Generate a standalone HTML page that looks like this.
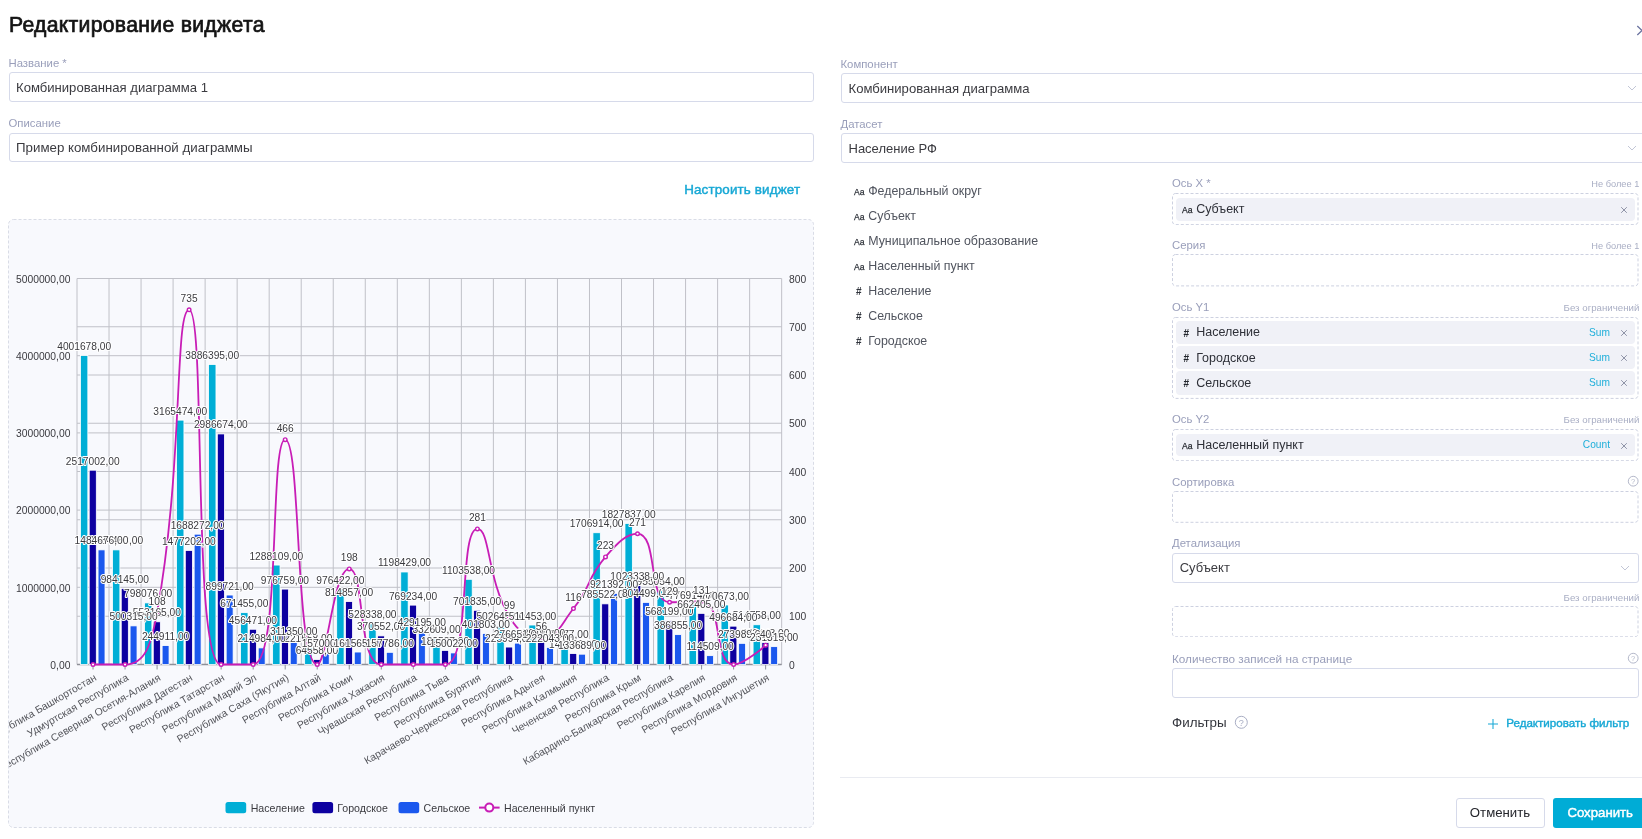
<!DOCTYPE html>
<html><head><meta charset="utf-8"><title>Редактирование виджета</title>
<style>
html,body{margin:0;padding:0;}
body{width:1642px;height:839px;overflow:hidden;position:relative;background:#fff;font-family:"Liberation Sans",sans-serif;}
.t{position:absolute;white-space:nowrap;line-height:1;}
.b{position:absolute;box-sizing:border-box;}
</style></head><body>
<div id="wrap" style="position:absolute;left:0;top:0;width:1642px;height:839px;will-change:transform;background:#fff;">
<div class="t" style="left:8.9px;top:13.7px;font-size:21.2px;color:#141414;-webkit-text-stroke:0.7px #141414;letter-spacing:0.3px;">Редактирование виджета</div>
<svg class="b" style="left:1632px;top:20px" width="14" height="20"><path d="M5.3,6 L10,10.5 L5.3,15" fill="none" stroke="#6C74A0" stroke-width="1.3"/></svg>
<div class="t" style="left:8.5px;top:58.4px;font-size:11.35px;color:#999EBA;">Название *</div>
<div class="b" style="left:8.5px;top:72.0px;width:805.0px;height:29.5px;border:1px solid #D6DAEA;border-radius:3px;background:#fff;"></div>
<div class="t" style="left:16.0px;top:80.7px;font-size:13.1px;color:#3B3B40;">Комбинированная диаграмма 1</div>
<div class="t" style="left:8.5px;top:118.4px;font-size:11.35px;color:#999EBA;">Описание</div>
<div class="b" style="left:8.5px;top:132.5px;width:805.0px;height:29.5px;border:1px solid #D6DAEA;border-radius:3px;background:#fff;"></div>
<div class="t" style="left:16.0px;top:140.9px;font-size:13.3px;color:#3B3B40;">Пример комбинированной диаграммы</div>
<div class="t" style="right:841.8px;top:182.8px;font-size:13.4px;color:#17A8D5;-webkit-text-stroke:0.45px #17A8D5;letter-spacing:0.15px;">Настроить виджет</div>
<svg class="b" style="left:8px;top:219px" width="806" height="609"><rect x="0.5" y="0.5" width="805" height="608" rx="5" fill="#F8F9FD" stroke="#D9DCE6" stroke-dasharray="3 2"/></svg>
<div class="t" style="left:840.5px;top:59.4px;font-size:11.35px;color:#999EBA;">Компонент</div>
<div class="b" style="left:840.5px;top:73.0px;width:819.5px;height:29.5px;border:1px solid #D6DAEA;border-radius:3px;background:#fff;"></div>
<div class="t" style="left:848.5px;top:82.3px;font-size:13.1px;color:#3B3B40;">Комбинированная диаграмма</div>
<svg class="b" style="left:1626.8px;top:85.0px" width="10" height="6"><path d="M1,1 L5,5 L9,1" fill="none" stroke="#C2C6D6" stroke-width="1"/></svg>
<div class="t" style="left:840.5px;top:119.4px;font-size:11.35px;color:#999EBA;">Датасет</div>
<div class="b" style="left:840.5px;top:133.0px;width:819.5px;height:29.5px;border:1px solid #D6DAEA;border-radius:3px;background:#fff;"></div>
<div class="t" style="left:848.5px;top:142.4px;font-size:13.0px;color:#3B3B40;">Население РФ</div>
<svg class="b" style="left:1626.8px;top:145.0px" width="10" height="6"><path d="M1,1 L5,5 L9,1" fill="none" stroke="#C2C6D6" stroke-width="1"/></svg>
<div class="t" style="left:853.8px;top:187.3px;font-size:9.8px;color:#2A2E36;-webkit-text-stroke:0.25px #2A2E36;transform:scaleX(0.88);transform-origin:0 0;">Aa</div>
<div class="t" style="left:868.2px;top:184.5px;font-size:12.4px;color:#50545E;">Федеральный округ</div>
<div class="t" style="left:853.8px;top:212.3px;font-size:9.8px;color:#2A2E36;-webkit-text-stroke:0.25px #2A2E36;transform:scaleX(0.88);transform-origin:0 0;">Aa</div>
<div class="t" style="left:868.2px;top:209.5px;font-size:12.4px;color:#50545E;">Субъект</div>
<div class="t" style="left:853.8px;top:237.3px;font-size:9.8px;color:#2A2E36;-webkit-text-stroke:0.25px #2A2E36;transform:scaleX(0.88);transform-origin:0 0;">Aa</div>
<div class="t" style="left:868.2px;top:234.5px;font-size:12.4px;color:#50545E;">Муниципальное образование</div>
<div class="t" style="left:853.8px;top:262.3px;font-size:9.8px;color:#2A2E36;-webkit-text-stroke:0.25px #2A2E36;transform:scaleX(0.88);transform-origin:0 0;">Aa</div>
<div class="t" style="left:868.2px;top:259.5px;font-size:12.4px;color:#50545E;">Населенный пункт</div>
<div class="t" style="left:856.0px;top:286.5px;font-size:10px;color:#30343C;font-weight:bold;">#</div>
<div class="t" style="left:868.2px;top:284.5px;font-size:12.4px;color:#50545E;">Население</div>
<div class="t" style="left:856.0px;top:311.5px;font-size:10px;color:#30343C;font-weight:bold;">#</div>
<div class="t" style="left:868.2px;top:309.5px;font-size:12.4px;color:#50545E;">Сельское</div>
<div class="t" style="left:856.0px;top:336.5px;font-size:10px;color:#30343C;font-weight:bold;">#</div>
<div class="t" style="left:868.2px;top:334.5px;font-size:12.4px;color:#50545E;">Городское</div>
<div class="t" style="left:1172.0px;top:178.1px;font-size:11.35px;color:#999EBA;">Ось X *</div>
<div class="t" style="right:2.7px;top:179.5px;font-size:9.25px;color:#A9AEC4;">Не более 1</div>
<svg class="b" style="left:1172.0px;top:192.7px" width="466.5" height="32.1"><rect x="0.5" y="0.5" width="465.5" height="31.1" rx="3" fill="none" stroke="#CDD1E0" stroke-dasharray="3 2"/></svg>
<div class="b" style="left:1176.3px;top:198.2px;width:458.7px;height:22.5px;border:none;border-radius:4px;background:#F0F1F7;"></div>
<div class="t" style="left:1181.7px;top:205.3px;font-size:9.8px;color:#22252C;-webkit-text-stroke:0.25px #22252C;transform:scaleX(0.88);transform-origin:0 0;">Aa</div>
<div class="t" style="left:1196.2px;top:203.2px;font-size:12.5px;color:#2E3038;">Субъект</div>
<svg class="b" style="left:1619.6px;top:205.8px" width="8" height="8"><path d="M1.2,1.2 L6.8,6.8 M6.8,1.2 L1.2,6.8" fill="none" stroke="#8F94A8" stroke-width="1"/></svg>
<div class="t" style="left:1172.0px;top:240.4px;font-size:11.35px;color:#999EBA;">Серия</div>
<div class="t" style="right:2.7px;top:241.8px;font-size:9.25px;color:#A9AEC4;">Не более 1</div>
<svg class="b" style="left:1172.0px;top:254.4px" width="466.5" height="32.4"><rect x="0.5" y="0.5" width="465.5" height="31.4" rx="3" fill="none" stroke="#CDD1E0" stroke-dasharray="3 2"/></svg>
<div class="t" style="left:1172.0px;top:301.8px;font-size:11.35px;color:#999EBA;">Ось Y1</div>
<div class="t" style="right:2.7px;top:302.8px;font-size:9.7px;color:#A9AEC4;">Без ограничений</div>
<svg class="b" style="left:1172.0px;top:316.7px" width="466.5" height="81.9"><rect x="0.5" y="0.5" width="465.5" height="80.9" rx="3" fill="none" stroke="#CDD1E0" stroke-dasharray="3 2"/></svg>
<div class="b" style="left:1176.3px;top:321.1px;width:458.7px;height:23.2px;border:none;border-radius:4px;background:#F0F1F7;"></div>
<div class="t" style="left:1183.5px;top:328.8px;font-size:10px;color:#22252C;font-weight:bold;">#</div>
<div class="t" style="left:1196.2px;top:326.4px;font-size:12.5px;color:#2E3038;">Население</div>
<div class="t" style="right:32.0px;top:327.9px;font-size:10.2px;color:#20AFDA;">Sum</div>
<svg class="b" style="left:1619.6px;top:329.0px" width="8" height="8"><path d="M1.2,1.2 L6.8,6.8 M6.8,1.2 L1.2,6.8" fill="none" stroke="#8F94A8" stroke-width="1"/></svg>
<div class="b" style="left:1176.3px;top:346.4px;width:458.7px;height:23.1px;border:none;border-radius:4px;background:#F0F1F7;"></div>
<div class="t" style="left:1183.5px;top:354.1px;font-size:10px;color:#22252C;font-weight:bold;">#</div>
<div class="t" style="left:1196.2px;top:351.7px;font-size:12.5px;color:#2E3038;">Городское</div>
<div class="t" style="right:32.0px;top:353.1px;font-size:10.2px;color:#20AFDA;">Sum</div>
<svg class="b" style="left:1619.6px;top:354.2px" width="8" height="8"><path d="M1.2,1.2 L6.8,6.8 M6.8,1.2 L1.2,6.8" fill="none" stroke="#8F94A8" stroke-width="1"/></svg>
<div class="b" style="left:1176.3px;top:371.3px;width:458.7px;height:23.3px;border:none;border-radius:4px;background:#F0F1F7;"></div>
<div class="t" style="left:1183.5px;top:379.1px;font-size:10px;color:#22252C;font-weight:bold;">#</div>
<div class="t" style="left:1196.2px;top:376.7px;font-size:12.5px;color:#2E3038;">Сельское</div>
<div class="t" style="right:32.0px;top:378.1px;font-size:10.2px;color:#20AFDA;">Sum</div>
<svg class="b" style="left:1619.6px;top:379.3px" width="8" height="8"><path d="M1.2,1.2 L6.8,6.8 M6.8,1.2 L1.2,6.8" fill="none" stroke="#8F94A8" stroke-width="1"/></svg>
<div class="t" style="left:1172.0px;top:414.4px;font-size:11.35px;color:#999EBA;">Ось Y2</div>
<div class="t" style="right:2.7px;top:415.4px;font-size:9.7px;color:#A9AEC4;">Без ограничений</div>
<svg class="b" style="left:1172.0px;top:428.6px" width="466.5" height="32.2"><rect x="0.5" y="0.5" width="465.5" height="31.2" rx="3" fill="none" stroke="#CDD1E0" stroke-dasharray="3 2"/></svg>
<div class="b" style="left:1176.3px;top:434.1px;width:458.7px;height:22.3px;border:none;border-radius:4px;background:#F0F1F7;"></div>
<div class="t" style="left:1181.7px;top:441.1px;font-size:9.8px;color:#22252C;-webkit-text-stroke:0.25px #22252C;transform:scaleX(0.88);transform-origin:0 0;">Aa</div>
<div class="t" style="left:1196.2px;top:439.0px;font-size:12.5px;color:#2E3038;">Населенный пункт</div>
<div class="t" style="right:32.0px;top:440.4px;font-size:10.2px;color:#20AFDA;">Count</div>
<svg class="b" style="left:1619.6px;top:441.6px" width="8" height="8"><path d="M1.2,1.2 L6.8,6.8 M6.8,1.2 L1.2,6.8" fill="none" stroke="#8F94A8" stroke-width="1"/></svg>
<div class="t" style="left:1172.0px;top:476.8px;font-size:11.35px;color:#999EBA;">Сортировка</div>
<svg class="b" style="left:1627.3px;top:475.2px" width="12.4" height="12.4"><circle cx="6.2" cy="6.2" r="4.9" fill="none" stroke="#B4B8CA" stroke-width="1"/><text x="6.2" y="8.8" text-anchor="middle" font-family="Liberation Sans" font-size="7.5" fill="#B4B8CA">?</text></svg>
<svg class="b" style="left:1172.0px;top:491.0px" width="466.5" height="31.8"><rect x="0.5" y="0.5" width="465.5" height="30.8" rx="3" fill="none" stroke="#CDD1E0" stroke-dasharray="3 2"/></svg>
<div class="t" style="left:1172.0px;top:537.9px;font-size:11.35px;color:#999EBA;">Детализация</div>
<div class="b" style="left:1172.0px;top:553.3px;width:466.5px;height:29.5px;border:1px solid #D6DAEA;border-radius:3px;background:#fff;"></div>
<div class="t" style="left:1179.7px;top:560.7px;font-size:13px;color:#3B3B40;">Субъект</div>
<svg class="b" style="left:1620.0px;top:565.0px" width="10" height="6"><path d="M1,1 L5,5 L9,1" fill="none" stroke="#C2C6D6" stroke-width="1"/></svg>
<div class="t" style="right:2.7px;top:593.0px;font-size:9.7px;color:#A9AEC4;">Без ограничений</div>
<svg class="b" style="left:1172.0px;top:606.2px" width="466.5" height="31.3"><rect x="0.5" y="0.5" width="465.5" height="30.3" rx="3" fill="none" stroke="#CDD1E0" stroke-dasharray="3 2"/></svg>
<div class="t" style="left:1172.0px;top:653.1px;font-size:11.75px;color:#999EBA;">Количество записей на странице</div>
<svg class="b" style="left:1627.3px;top:651.8px" width="12.4" height="12.4"><circle cx="6.2" cy="6.2" r="4.9" fill="none" stroke="#B4B8CA" stroke-width="1"/><text x="6.2" y="8.8" text-anchor="middle" font-family="Liberation Sans" font-size="7.5" fill="#B4B8CA">?</text></svg>
<div class="b" style="left:1172.0px;top:668.3px;width:466.5px;height:29.5px;border:1px solid #D6DAEA;border-radius:3px;background:#fff;"></div>
<div class="t" style="left:1172.0px;top:716.2px;font-size:13.4px;color:#33353C;">Фильтры</div>
<svg class="b" style="left:1233.7px;top:714.5px" width="14.6" height="14.6"><circle cx="7.3" cy="7.3" r="6.0" fill="none" stroke="#A9AEC4" stroke-width="1"/><text x="7.3" y="10.5" text-anchor="middle" font-family="Liberation Sans" font-size="9.1" fill="#A9AEC4">?</text></svg>
<svg class="b" style="left:1487px;top:718px" width="12" height="12"><path d="M6,1V11M1,6H11" stroke="#17A8D5" stroke-width="1.05"/></svg>
<div class="t" style="right:12.8px;top:716.7px;font-size:11.6px;color:#17A8D5;-webkit-text-stroke:0.4px #17A8D5;">Редактировать фильтр</div>
<div class="b" style="left:840px;top:776.5px;width:802px;height:1px;background:#E9EBF1"></div>
<div class="b" style="left:1455.5px;top:798.4px;width:89.0px;height:29.3px;border:1px solid #D6DAEA;border-radius:3px;background:#fff;"></div>
<div class="t" style="left:1500.0px;top:805.8px;font-size:13.2px;color:#24252B;transform:translateX(-50%);">Отменить</div>
<div class="b" style="left:1553.2px;top:798.4px;width:96.8px;height:29.3px;border:none;border-radius:3px;background:#00ACD6;"></div>
<div class="t" style="left:1600.2px;top:805.8px;font-size:13.2px;color:#fff;transform:translateX(-50%);-webkit-text-stroke:0.45px #fff;">Сохранить</div>
<svg width="1642" height="839" viewBox="0 0 1642 839" style="position:absolute;left:0;top:0">
<path d="M77.00,278.50V664.50 M109.03,278.50V664.50 M141.06,278.50V664.50 M173.09,278.50V664.50 M205.12,278.50V664.50 M237.15,278.50V664.50 M269.18,278.50V664.50 M301.21,278.50V664.50 M333.24,278.50V664.50 M365.27,278.50V664.50 M397.30,278.50V664.50 M429.33,278.50V664.50 M461.36,278.50V664.50 M493.39,278.50V664.50 M525.42,278.50V664.50 M557.45,278.50V664.50 M589.48,278.50V664.50 M621.51,278.50V664.50 M653.54,278.50V664.50 M685.57,278.50V664.50 M717.60,278.50V664.50 M749.63,278.50V664.50 M781.66,278.50V664.50 M77.00,664.50H781.66 M77.00,587.30H781.66 M77.00,510.10H781.66 M77.00,432.90H781.66 M77.00,355.70H781.66 M77.00,278.50H781.66 M77.00,616.25H781.66 M77.00,568.00H781.66 M77.00,519.75H781.66 M77.00,471.50H781.66 M77.00,423.25H781.66 M77.00,375.00H781.66 M77.00,326.75H781.66" stroke="#C0C1C8" stroke-width="1" fill="none"/>
<path d="M77.00,664.50H781.66" stroke="#8E9098" stroke-width="1.3"/>
<path d="M93.02,664.50v5 M125.05,664.50v5 M157.07,664.50v5 M189.11,664.50v5 M221.13,664.50v5 M253.17,664.50v5 M285.19,664.50v5 M317.23,664.50v5 M349.25,664.50v5 M381.29,664.50v5 M413.31,664.50v5 M445.35,664.50v5 M477.38,664.50v5 M509.41,664.50v5 M541.43,664.50v5 M573.47,664.50v5 M605.50,664.50v5 M637.52,664.50v5 M669.56,664.50v5 M701.59,664.50v5 M733.62,664.50v5 M765.64,664.50v5" stroke="#8E9098" stroke-width="1"/>
<g stroke="#fff" stroke-width="0.8"><rect x="80.45" y="355.57" width="7.4" height="308.93" fill="#00AED6"/><rect x="89.20" y="470.19" width="7.1" height="194.31" fill="#0D00A0"/><rect x="98.05" y="549.88" width="6.95" height="114.62" fill="#1B58EE"/><rect x="112.48" y="549.90" width="7.4" height="114.60" fill="#00AED6"/><rect x="121.23" y="588.52" width="7.1" height="75.98" fill="#0D00A0"/><rect x="130.08" y="625.88" width="6.95" height="38.62" fill="#1B58EE"/><rect x="144.51" y="602.89" width="7.4" height="61.61" fill="#00AED6"/><rect x="153.26" y="621.80" width="7.1" height="42.70" fill="#0D00A0"/><rect x="162.11" y="645.59" width="6.95" height="18.91" fill="#1B58EE"/><rect x="176.54" y="420.13" width="7.4" height="244.37" fill="#00AED6"/><rect x="185.29" y="550.46" width="7.1" height="114.04" fill="#0D00A0"/><rect x="194.14" y="534.17" width="6.95" height="130.33" fill="#1B58EE"/><rect x="208.57" y="364.47" width="7.4" height="300.03" fill="#00AED6"/><rect x="217.32" y="433.93" width="7.1" height="230.57" fill="#0D00A0"/><rect x="226.17" y="595.04" width="6.95" height="69.46" fill="#1B58EE"/><rect x="240.60" y="612.66" width="7.4" height="51.84" fill="#00AED6"/><rect x="249.35" y="629.26" width="7.1" height="35.24" fill="#0D00A0"/><rect x="258.20" y="647.90" width="6.95" height="16.60" fill="#1B58EE"/><rect x="272.63" y="565.06" width="7.4" height="99.44" fill="#00AED6"/><rect x="281.38" y="589.09" width="7.1" height="75.41" fill="#0D00A0"/><rect x="290.23" y="640.46" width="6.95" height="24.04" fill="#1B58EE"/><rect x="304.66" y="647.40" width="7.4" height="17.10" fill="#00AED6"/><rect x="313.41" y="659.52" width="7.1" height="4.98" fill="#0D00A0"/><rect x="322.26" y="652.38" width="6.95" height="12.12" fill="#1B58EE"/><rect x="336.69" y="589.12" width="7.4" height="75.38" fill="#00AED6"/><rect x="345.44" y="601.59" width="7.1" height="62.91" fill="#0D00A0"/><rect x="354.29" y="652.03" width="6.95" height="12.47" fill="#1B58EE"/><rect x="368.72" y="623.71" width="7.4" height="40.79" fill="#00AED6"/><rect x="377.47" y="635.89" width="7.1" height="28.61" fill="#0D00A0"/><rect x="386.32" y="652.32" width="6.95" height="12.18" fill="#1B58EE"/><rect x="400.75" y="571.98" width="7.4" height="92.52" fill="#00AED6"/><rect x="409.50" y="605.12" width="7.1" height="59.38" fill="#0D00A0"/><rect x="418.35" y="631.37" width="6.95" height="33.13" fill="#1B58EE"/><rect x="432.78" y="638.82" width="7.4" height="25.68" fill="#00AED6"/><rect x="441.53" y="650.40" width="7.1" height="14.10" fill="#0D00A0"/><rect x="450.38" y="652.92" width="6.95" height="11.58" fill="#1B58EE"/><rect x="464.81" y="579.31" width="7.4" height="85.19" fill="#00AED6"/><rect x="473.56" y="610.32" width="7.1" height="54.18" fill="#0D00A0"/><rect x="482.41" y="633.48" width="6.95" height="31.02" fill="#1B58EE"/><rect x="496.84" y="625.70" width="7.4" height="38.80" fill="#00AED6"/><rect x="505.59" y="647.05" width="7.1" height="17.45" fill="#0D00A0"/><rect x="514.44" y="643.14" width="6.95" height="21.36" fill="#1B58EE"/><rect x="528.87" y="625.02" width="7.4" height="39.48" fill="#00AED6"/><rect x="537.62" y="642.16" width="7.1" height="22.34" fill="#0D00A0"/><rect x="546.47" y="647.36" width="6.95" height="17.14" fill="#1B58EE"/><rect x="560.90" y="643.26" width="7.4" height="21.24" fill="#00AED6"/><rect x="569.65" y="653.58" width="7.1" height="10.92" fill="#0D00A0"/><rect x="578.50" y="654.18" width="6.95" height="10.32" fill="#1B58EE"/><rect x="592.93" y="532.73" width="7.4" height="131.77" fill="#00AED6"/><rect x="601.68" y="603.86" width="7.1" height="60.64" fill="#0D00A0"/><rect x="610.53" y="593.37" width="6.95" height="71.13" fill="#1B58EE"/><rect x="624.96" y="523.39" width="7.4" height="141.11" fill="#00AED6"/><rect x="633.71" y="585.50" width="7.1" height="79.00" fill="#0D00A0"/><rect x="642.56" y="602.39" width="6.95" height="62.11" fill="#1B58EE"/><rect x="656.99" y="590.77" width="7.4" height="73.73" fill="#00AED6"/><rect x="665.74" y="620.64" width="7.1" height="43.86" fill="#0D00A0"/><rect x="674.59" y="634.63" width="6.95" height="29.87" fill="#1B58EE"/><rect x="689.02" y="604.52" width="7.4" height="59.98" fill="#00AED6"/><rect x="697.77" y="613.36" width="7.1" height="51.14" fill="#0D00A0"/><rect x="706.62" y="655.66" width="6.95" height="8.84" fill="#1B58EE"/><rect x="721.05" y="605.00" width="7.4" height="59.50" fill="#00AED6"/><rect x="729.80" y="626.16" width="7.1" height="38.34" fill="#0D00A0"/><rect x="738.65" y="643.35" width="6.95" height="21.15" fill="#1B58EE"/><rect x="753.08" y="624.76" width="7.4" height="39.74" fill="#00AED6"/><rect x="761.83" y="642.62" width="7.1" height="21.88" fill="#0D00A0"/><rect x="770.68" y="646.64" width="6.95" height="17.86" fill="#1B58EE"/></g>
<path d="M93.02,664.50 C93.02,664.50 114.04,664.50 125.05,664.50 C146.07,664.50 151.71,642.07 157.07,612.39 C183.74,464.76 174.35,309.86 189.11,309.86 C206.38,309.86 191.75,664.50 221.13,664.50 C223.78,664.50 249.21,664.50 253.17,664.50 C281.24,664.50 269.18,439.65 285.19,439.65 C301.21,439.65 295.04,664.50 317.23,664.50 C327.07,664.50 333.24,568.97 349.25,568.97 C365.27,568.97 356.98,664.50 381.29,664.50 C389.01,664.50 397.30,664.50 413.31,664.50 C429.33,664.50 439.36,664.50 445.35,664.50 C471.39,664.50 458.21,528.92 477.38,528.92 C490.24,528.92 486.66,578.19 509.41,616.73 C518.69,632.47 526.41,637.48 541.43,637.48 C558.44,637.48 560.16,625.27 573.47,608.53 C592.19,584.98 586.09,579.56 605.50,556.90 C618.12,542.16 626.53,533.74 637.52,533.74 C658.56,533.74 647.06,602.26 669.56,602.26 C679.09,602.26 691.61,601.29 701.59,601.29 C723.64,601.29 712.65,664.50 733.62,664.50 C744.68,664.50 765.64,645.20 765.64,645.20" stroke="#C81DB6" stroke-width="1.8" fill="none"/>
<g fill="#fff" stroke="#C81DB6" stroke-width="1.4"><circle cx="93.02" cy="664.50" r="1.8"/><circle cx="125.05" cy="664.50" r="1.8"/><circle cx="157.07" cy="612.39" r="1.8"/><circle cx="189.11" cy="309.86" r="1.8"/><circle cx="221.13" cy="664.50" r="1.8"/><circle cx="253.17" cy="664.50" r="1.8"/><circle cx="285.19" cy="439.65" r="1.8"/><circle cx="317.23" cy="664.50" r="1.8"/><circle cx="349.25" cy="568.97" r="1.8"/><circle cx="381.29" cy="664.50" r="1.8"/><circle cx="413.31" cy="664.50" r="1.8"/><circle cx="445.35" cy="664.50" r="1.8"/><circle cx="477.38" cy="528.92" r="1.8"/><circle cx="509.41" cy="616.73" r="1.8"/><circle cx="541.43" cy="637.48" r="1.8"/><circle cx="573.47" cy="608.53" r="1.8"/><circle cx="605.50" cy="556.90" r="1.8"/><circle cx="637.52" cy="533.74" r="1.8"/><circle cx="669.56" cy="602.26" r="1.8"/><circle cx="701.59" cy="601.29" r="1.8"/><circle cx="733.62" cy="664.50" r="1.8"/><circle cx="765.64" cy="645.20" r="1.8"/></g>
<g font-family="Liberation Sans, sans-serif" font-size="10.3" fill="#3A3A3F"><text x="70.4" y="668.70" text-anchor="end">0,00</text><text x="70.4" y="591.50" text-anchor="end">1000000,00</text><text x="70.4" y="514.30" text-anchor="end">2000000,00</text><text x="70.4" y="437.10" text-anchor="end">3000000,00</text><text x="70.4" y="359.90" text-anchor="end">4000000,00</text><text x="70.4" y="282.70" text-anchor="end">5000000,00</text><text x="789" y="668.50">0</text><text x="789" y="620.25">100</text><text x="789" y="572.00">200</text><text x="789" y="523.75">300</text><text x="789" y="475.50">400</text><text x="789" y="427.25">500</text><text x="789" y="379.00">600</text><text x="789" y="330.75">700</text><text x="789" y="282.50">800</text></g>
<defs><clipPath id="cc"><rect x="9" y="220" width="804" height="606"/></clipPath></defs>
<g clip-path="url(#cc)" font-family="Liberation Sans, sans-serif" font-size="10.4" fill="#55565C"><text transform="translate(97.22,679.70) rotate(-30)" text-anchor="end">Республика Башкортостан</text><text transform="translate(129.25,679.70) rotate(-30)" text-anchor="end">Удмуртская Республика</text><text transform="translate(161.27,679.70) rotate(-30)" text-anchor="end">Республика Северная Осетия-Алания</text><text transform="translate(193.31,679.70) rotate(-30)" text-anchor="end">Республика Дагестан</text><text transform="translate(225.33,679.70) rotate(-30)" text-anchor="end">Республика Татарстан</text><text transform="translate(257.37,679.70) rotate(-30)" text-anchor="end">Республика Марий Эл</text><text transform="translate(289.39,679.70) rotate(-30)" text-anchor="end">Республика Саха (Якутия)</text><text transform="translate(321.43,679.70) rotate(-30)" text-anchor="end">Республика Алтай</text><text transform="translate(353.45,679.70) rotate(-30)" text-anchor="end">Республика Коми</text><text transform="translate(385.49,679.70) rotate(-30)" text-anchor="end">Республика Хакасия</text><text transform="translate(417.51,679.70) rotate(-30)" text-anchor="end">Чувашская Республика</text><text transform="translate(449.55,679.70) rotate(-30)" text-anchor="end">Республика Тыва</text><text transform="translate(481.57,679.70) rotate(-30)" text-anchor="end">Республика Бурятия</text><text transform="translate(513.61,679.70) rotate(-30)" text-anchor="end">Карачаево-Черкесская Республика</text><text transform="translate(545.63,679.70) rotate(-30)" text-anchor="end">Республика Адыгея</text><text transform="translate(577.67,679.70) rotate(-30)" text-anchor="end">Республика Калмыкия</text><text transform="translate(609.70,679.70) rotate(-30)" text-anchor="end">Чеченская Республика</text><text transform="translate(641.73,679.70) rotate(-30)" text-anchor="end">Республика Крым</text><text transform="translate(673.76,679.70) rotate(-30)" text-anchor="end">Кабардино-Балкарская Республика</text><text transform="translate(705.79,679.70) rotate(-30)" text-anchor="end">Республика Карелия</text><text transform="translate(737.82,679.70) rotate(-30)" text-anchor="end">Республика Мордовия</text><text transform="translate(769.85,679.70) rotate(-30)" text-anchor="end">Республика Ингушетия</text></g>
<g font-family="Liberation Sans, sans-serif" font-size="10.2" fill="#3A3A3F" text-anchor="middle" stroke="#fff" stroke-width="2" stroke-linejoin="round" paint-order="stroke"><text x="84.15" y="350.07">4001678,00</text><text x="116.18" y="544.40">1484460,00</text><text x="148.21" y="597.39">798076,00</text><text x="180.24" y="414.63">3165474,00</text><text x="212.27" y="358.97">3886395,00</text><text x="244.30" y="607.16">671455,00</text><text x="276.33" y="559.56">1288109,00</text><text x="308.36" y="641.90">221558,00</text><text x="340.39" y="583.62">976422,00</text><text x="372.42" y="618.21">528338,00</text><text x="404.45" y="566.48">1198429,00</text><text x="436.48" y="633.32">332609,00</text><text x="468.51" y="573.81">1103538,00</text><text x="500.54" y="620.20">502645,00</text><text x="532.57" y="619.52">511453,00</text><text x="564.60" y="637.76">275077,00</text><text x="596.63" y="527.23">1706914,00</text><text x="628.66" y="517.89">1827837,00</text><text x="660.69" y="585.27">955054,00</text><text x="692.72" y="599.02">776914,00</text><text x="724.75" y="599.50">770673,00</text><text x="756.78" y="619.26">514758,00</text><text x="92.75" y="464.69">2517002,00</text><text x="124.78" y="583.02">984145,00</text><text x="156.81" y="616.30">553165,00</text><text x="188.84" y="544.96">1477202,00</text><text x="220.87" y="428.43">2986674,00</text><text x="252.90" y="623.76">456471,00</text><text x="284.93" y="583.59">976759,00</text><text x="316.96" y="654.02">64558,00</text><text x="348.99" y="596.09">814857,00</text><text x="381.02" y="630.39">370552,00</text><text x="413.05" y="599.62">769234,00</text><text x="445.08" y="644.90">182587,00</text><text x="477.11" y="604.82">701835,00</text><text x="509.14" y="641.55">225994,00</text><text x="541.17" y="636.66">289410,00</text><text x="573.20" y="648.08">141388,00</text><text x="605.23" y="598.36">785522,00</text><text x="637.26" y="580.00">1023338,00</text><text x="669.29" y="615.14">568199,00</text><text x="701.32" y="607.86">662405,00</text><text x="733.35" y="620.66">496684,00</text><text x="765.38" y="637.12">283443,00</text><text x="101.52" y="544.38">1484676,00</text><text x="133.56" y="620.38">500315,00</text><text x="165.59" y="640.09">244911,00</text><text x="197.62" y="528.67">1688272,00</text><text x="229.65" y="589.54">899721,00</text><text x="261.68" y="642.40">214984,00</text><text x="293.71" y="634.96">311350,00</text><text x="325.74" y="646.88">157000,00</text><text x="357.77" y="646.53">161565,00</text><text x="389.80" y="646.82">157786,00</text><text x="421.83" y="625.87">429195,00</text><text x="453.86" y="647.42">150022,00</text><text x="485.89" y="627.98">401803,00</text><text x="517.91" y="637.64">276651,00</text><text x="549.95" y="641.86">222043,00</text><text x="581.98" y="648.68">133689,00</text><text x="614.00" y="587.87">921392,00</text><text x="646.03" y="596.89">804499,00</text><text x="678.06" y="629.13">386855,00</text><text x="710.10" y="650.16">114509,00</text><text x="742.12" y="637.85">273989,00</text><text x="774.15" y="641.14">231315,00</text><text x="157.07" y="604.89">108</text><text x="189.11" y="302.36">735</text><text x="285.19" y="432.15">466</text><text x="349.25" y="561.47">198</text><text x="477.38" y="521.42">281</text><text x="509.41" y="609.23">99</text><text x="541.43" y="629.98">56</text><text x="573.47" y="601.03">116</text><text x="605.50" y="549.40">223</text><text x="637.52" y="526.24">271</text><text x="669.56" y="594.76">129</text><text x="701.59" y="593.79">131</text><text x="765.64" y="637.70">40</text></g>
<rect x="225.5" y="802" width="20.7" height="11.2" rx="2.5" fill="#00AED6"/><rect x="312.4" y="802" width="20.7" height="11.2" rx="2.5" fill="#0D00A0"/><rect x="398.5" y="802" width="20.7" height="11.2" rx="2.5" fill="#1B58EE"/><path d="M479,807.6H499.6" stroke="#C81DB6" stroke-width="2"/><circle cx="489.3" cy="807.6" r="4" fill="#fff" stroke="#C81DB6" stroke-width="2"/><g font-family="Liberation Sans, sans-serif" font-size="10.6" fill="#3A3A3F"><text x="250.7" y="812.4">Население</text><text x="337.3" y="812.4">Городское</text><text x="423.5" y="812.4">Сельское</text><text x="504" y="812.4">Населенный пункт</text></g>
</svg>
</div>
</body></html>
